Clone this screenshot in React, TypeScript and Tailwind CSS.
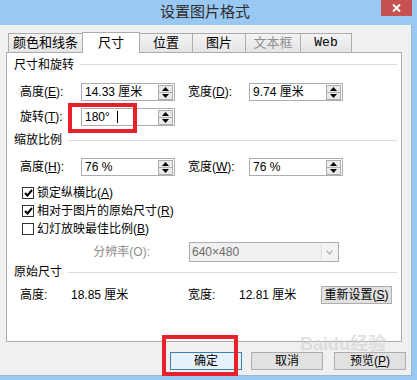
import React from "react";

const font = "font-['Liberation_Sans','Noto_Sans_CJK_SC',sans-serif]";

// little up/down spinner drawn inside the number boxes
const Spin = () => (
  <div className="w-[15px] h-[15px] border border-[#adadad] flex flex-col bg-[#eaeaea]">
    <div className="flex-1 flex items-center justify-center border-b border-[#adadad]">
      <svg width="7" height="4" viewBox="0 0 7 4">
        <path d="M0 4 L3.5 0 L7 4Z" fill="#000" />
      </svg>
    </div>
    <div className="flex-1 flex items-center justify-center">
      <svg width="7" height="4" viewBox="0 0 7 4">
        <path d="M0 0 L3.5 4 L7 0Z" fill="#000" />
      </svg>
    </div>
  </div>
);

const Field = ({ children }: { children: React.ReactNode }) => (
  <div className="w-[94px] h-[18px] border border-[#abadb3] bg-white flex items-center pl-[3px] pr-[1px]">
    <div className="flex-1 flex items-center text-[12px] leading-none whitespace-pre">{children}</div>
    <Spin />
  </div>
);

const Label = ({ a, k, b = "):" }: { a: string; k: string; b?: string }) => (
  <span className="w-[61px] shrink-0 text-[12px] whitespace-nowrap">
    {a}(<span className="underline">{k}</span>{b}
  </span>
);

const Section = ({ title, h }: { title: string; h: string }) => (
  <div className={`${h} flex items-center pl-[7px] pr-[4px]`}>
    <span className="text-[12px]">{title}</span>
    <div className="flex-1 h-px bg-[#dcdcdc] ml-[6px]" />
  </div>
);

const Check = ({ on, children }: { on?: boolean; children: React.ReactNode }) => (
  <div className="h-[18px] flex items-center pl-[15px]">
    <div className="w-[12px] h-[12px] border border-[#333] bg-white flex items-center justify-center">
      {on && (
        <svg width="9" height="8" viewBox="0 0 9 8">
          <path d="M1 4 L3.5 6.5 L8 1" stroke="#000" strokeWidth="2" fill="none" />
        </svg>
      )}
    </div>
    <span className="ml-[3px] text-[12px]">{children}</span>
  </div>
);

const tabs = [
  { t: "颜色和线条", w: "w-[75px]" },
  { t: "尺寸", w: "w-[58px]", on: true },
  { t: "位置", w: "w-[54px]" },
  { t: "图片", w: "w-[54px]" },
  { t: "文本框", w: "w-[56px]", off: true },
  { t: "Web", w: "w-[52px]", mono: true },
];

const Btn = ({ children, cls }: { children: React.ReactNode; cls: string }) => (
  <div className={`h-[18px] flex items-center justify-center text-[12px] ${cls}`}>{children}</div>
);

export default function App() {
  return (
    <div className={`relative w-[417px] h-[380px] bg-[#99c9f3] flex flex-col overflow-hidden text-black ${font}`}>
      {/* title bar */}
      <div className="h-[25px] shrink-0 flex items-center justify-center pr-[7px] text-[15px] text-[#2e2e2e]">
        设置图片格式
      </div>
      <div className="absolute top-0 left-[381px] w-[31px] h-[16px] bg-[#c75050] flex items-center justify-center">
        <svg width="9" height="8" viewBox="0 0 9 8">
          <path d="M1 0.5 L8 7.5 M8 0.5 L1 7.5" stroke="#fff" strokeWidth="2" />
        </svg>
      </div>

      {/* dialog body */}
      <div className="h-[351px] w-[412px] shrink-0 bg-[#f0f0f0] border-r border-b border-[#9eb6cc] flex flex-col pt-[7px]">
        {/* tabs */}
        <div className="h-[20px] flex items-end pl-[8px]">
          {tabs.map((t, i) => (
            <div
              key={t.t}
              className={`${t.w} ${i > 0 ? "-ml-px" : ""} flex items-center justify-center border-t border-l border-r border-[#acacac] ${
                t.on
                  ? "h-[21px] -mb-px bg-white relative z-10 text-[13px]"
                  : "h-[19px] bg-gradient-to-b from-[#f3f3f3] to-[#e5e5e5] text-[13px]"
              } ${t.off ? "text-[#8f8f8f]" : ""} ${
                t.mono ? "font-['Liberation_Mono',monospace] text-[12px]" : ""
              }`}
            >
              {t.t}
            </div>
          ))}
        </div>

        {/* panel */}
        <div className="ml-[6px] w-[396px] h-[290px] border border-[#acacac] bg-white flex flex-col">
          <Section title="尺寸和旋转" h="h-[23px]" />
          <div className="h-[20px] mt-[6px] flex items-center pl-[13px]">
            <Label a="高度" k="E" />
            <Field>14.33 厘米</Field>
            <span className="w-[13px]" />
            <Label a="宽度" k="D" />
            <Field>9.74 厘米</Field>
          </div>
          <div className="h-[20px] mt-[5px] flex items-center pl-[13px]">
            <Label a="旋转" k="T" />
            <Field>
              180°  <span className="inline-block w-px h-[12px] bg-black" />
            </Field>
          </div>
          <Section title="缩放比例" h="h-[26px]" />
          <div className="h-[20px] mt-[4px] flex items-center pl-[13px]">
            <Label a="高度" k="H" />
            <Field>76 %</Field>
            <span className="w-[13px]" />
            <Label a="宽度" k="W" />
            <Field>76 %</Field>
          </div>
          <div className="mt-[7px] flex flex-col">
            <Check on>
              锁定纵横比(<span className="underline">A</span>)
            </Check>
            <Check on>
              相对于图片的原始尺寸(<span className="underline">R</span>)
            </Check>
            <Check>
              幻灯放映最佳比例(<span className="underline">B</span>)
            </Check>
          </div>
          <div className="h-[22px] mt-[3px] flex items-center">
            <span className="w-[143px] text-right text-[12px] text-[#8d8d8d]">分辨率(O):</span>
            <div className="ml-[39px] w-[150px] h-[20px] border border-[#adadad] bg-[#f0f0f0] flex items-center">
              <span className="flex-1 pl-[2px] text-[12px] text-[#6d6d6d]">640×480</span>
              <div className="w-[16px] h-[16px] mr-px border-l border-[#dcdcdc] bg-[#f4f4f4] flex items-center justify-center">
                <svg width="7" height="5" viewBox="0 0 7 5">
                  <path d="M0.5 0.5 L3.5 4 L6.5 0.5" stroke="#b5b5b5" strokeWidth="1.2" fill="none" />
                </svg>
              </div>
            </div>
          </div>
          <Section title="原始尺寸" h="h-[18px]" />
          <div className="h-[19px] mt-[4px] flex items-center pl-[13px] text-[12px]">
            <span className="w-[51px]">高度:</span>
            <span className="w-[117px]">18.85 厘米</span>
            <span className="w-[51px]">宽度:</span>
            <span className="w-[82px]">12.81 厘米</span>
            <Btn cls="w-[71px] h-[17px] border border-[#adadad] bg-[#e1e1e1]">
              重新设置(<span className="underline">S</span>)
            </Btn>
          </div>
        </div>

        {/* bottom buttons */}
        <div className="mt-[10px] flex pl-[170px]">
          <Btn cls="w-[72px] border border-[#3c7fb1] bg-[#e5f1fb]">确定</Btn>
          <Btn cls="w-[72px] ml-[9px] border border-[#adadad] bg-[#e1e1e1]">取消</Btn>
          <Btn cls="w-[72px] ml-[11px] border border-[#adadad] bg-[#e1e1e1]">
            预览(<span className="underline">P</span>)
          </Btn>
        </div>
      </div>

      {/* red annotation boxes */}
      <div className="absolute left-[68px] top-[103px] w-[69px] h-[30px] border-[4px] border-[#e8202a]" />
      <div className="absolute left-[162px] top-[335px] w-[76px] h-[41px] border-[4px] border-[#e8202a]" />

      {/* watermark */}
      <div className="absolute left-[300px] top-[333px] pointer-events-none opacity-60">
        <span className="text-[18px] font-bold leading-none text-[#d0d0d0]">Baidu经验</span>
      </div>
    </div>
  );
}
